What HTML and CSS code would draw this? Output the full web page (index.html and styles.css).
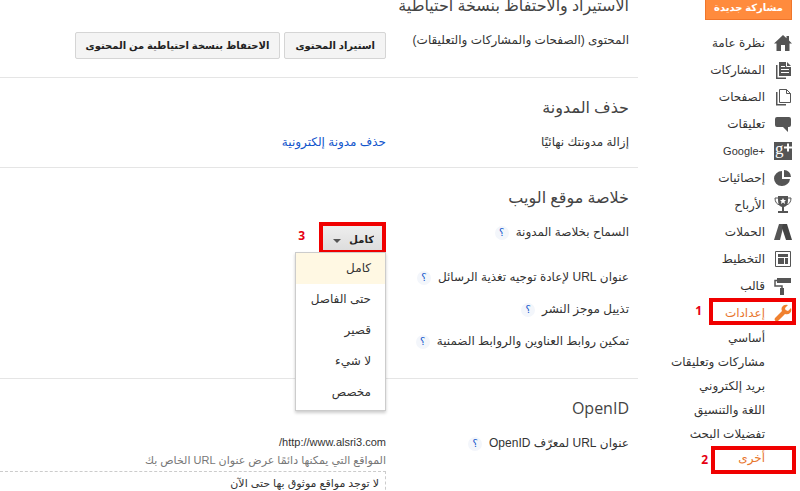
FILE: index.html
```html
<!DOCTYPE html>
<html lang="ar" dir="rtl">

<head>
    <meta charset="utf-8">
    <title>إعدادات</title>
    <link rel="stylesheet" href="styles.css">
</head>

<body>
    <div class="page">
        <nav class="sidebar">
            <button type="button" class="newPost">مشاركة جديدة</button>
            <ul class="menu">
                <li><a href="#overview">
                    <svg class="icon" viewBox="0 0 18 18"><path d="M9 1L0 9.500h2.500V17h4.500v-6h4v6h4.500V9.500H18L15 6.600V2h-2.500v2.300z"/></svg>
                    نظرة عامة</a></li>
                <li><a href="#posts">
                    <svg class="icon" viewBox="0 0 18 18"><path d="M2 4H3.500V16.500H12V18H2zM5 1h8l4 4v10H5z"/><path d="M12.500 1v4.500H17M7 5.500h4M7 8.500h8M7 11.500h8" fill="none" stroke="#fff"/></svg>
                    المشاركات</a></li>
                <li><a href="#pages">
                    <svg class="icon" viewBox="0 0 18 18"><path d="M2 4H3.500V16H12V17.500H2z"/><path d="M5.500 1.500h7l4 4v9h-11zM12.500 1.500v4h4" fill="none" stroke="#555"/></svg>
                    الصفحات</a></li>
                <li><a href="#comments">
                    <svg class="icon" viewBox="0 0 18 18"><path d="M3 2h12q2 0 2 2v6q0 2-2 2h-1v5l-5-5H3q-2 0-2-2V4q0-2 2-2z"/></svg>
                    تعليقات</a></li>
                <li><a href="#plus">
                    <svg class="icon" viewBox="0 0 18 18"><path d="M0 0h18v18H0z"/><text class="gplus" x="1" y="12" direction="ltr">g</text><path d="M10 5.500h8M14 1.500v8" stroke="#fff" stroke-width="2"/></svg>
                    <span class="latin" dir="ltr">Google+</span></a></li>
                <li><a href="#stats">
                    <svg class="icon" viewBox="0 0 18 18"><path d="M8 2v8h8a8 7.500 0 1 1-8-8z"/><path d="M10 1a7 7 0 0 1 7 7h-7z"/></svg>
                    إحصائيات</a></li>
                <li><a href="#earnings">
                    <svg class="icon" viewBox="0 0 18 18"><path d="M4 0h10v4q0 6-4 7v4h4v2H4v-2h4v-4Q4 10 4 4z"/><path d="M4 2H1q0 6 5 7M14 2h3q0 6-5 7" fill="none" stroke="#555"/><path d="M9 2l1 2h2l-1.500 1.500.5 2.500-2-1.500L7 8l.5-2.500L6 4h2z" fill="#fff"/></svg>
                    الأرباح</a></li>
                <li><a href="#campaigns">
                    <svg class="icon" viewBox="0 0 18 18"><path d="M5 1h5L6 17H0z"/><path d="M9 1h4l5 16h-6L8 5z" fill="#444"/></svg>
                    الحملات</a></li>
                <li><a href="#layout">
                    <svg class="icon" viewBox="0 0 18 18"><path d="M1.500 1.500h15v15h-15z" fill="none" stroke="#555"/><path d="M4 4h10v3H4zM4 8h6v6H4zM11 8h3v6h-3z"/></svg>
                    التخطيط</a></li>
                <li><a href="#template">
                    <svg class="icon" viewBox="0 0 18 18"><path d="M3 1h14v5H3zM6 11h4v7H6z"/><path d="M3 3.500H1V9h7v3" fill="none" stroke="#555" stroke-width="1.500"/></svg>
                    قالب</a></li>
                <li class="marked settings"><a href="#settings" class="active">
                    <svg class="icon" viewBox="0 0 18 18"><path d="M17 4l-3 3-2.500-1L11 4l3-3q-4-1-6 2-1 2 0 4L1 14q-1 1.500.3 2.800T4 17l7-7q3 1 5-1t1-5z"/></svg>
                    إعدادات</a><b class="step">1</b></li>
            </ul>
            <ul class="subMenu">
                <li><a href="#basic">أساسي</a></li>
                <li><a href="#posts-comments">مشاركات وتعليقات</a></li>
                <li><a href="#email">بريد إلكتروني</a></li>
                <li><a href="#language">اللغة والتنسيق</a></li>
                <li><a href="#search">تفضيلات البحث</a></li>
                <li class="marked other"><a href="#other" class="active">أخرى</a><b class="step">2</b></li>
            </ul>
        </nav>

        <main class="content">
            <section>
                <h2>الاستيراد والاحتفاظ بنسخة احتياطية</h2>
                <div class="row">
                    <div>المحتوى (الصفحات والمشاركات والتعليقات)</div>
                    <div class="buttons">
                        <button type="button">استيراد المحتوى</button>
                        <button type="button">الاحتفاظ بنسخة احتياطية من المحتوى</button>
                    </div>
                </div>
            </section>

            <section>
                <h2>حذف المدونة</h2>
                <div class="row">
                    <div>إزالة مدونتك نهائيًا</div>
                    <div><a href="#delete">حذف مدونة إلكترونية</a></div>
                </div>
            </section>

            <section class="feed">
                <h2>خلاصة موقع الويب</h2>
                <div class="row">
                    <div><label for="feedType">السماح بخلاصة المدونة</label><a href="#help" class="help">؟</a></div>
                    <div class="picker">
                        <select id="feedType">
                            <option>كامل</option>
                            <option>حتى الفاصل</option>
                            <option>قصير</option>
                            <option>لا شيء</option>
                            <option>مخصص</option>
                        </select>
                        <b class="step">3</b>
                        <ul class="options">
                            <li class="selected">كامل</li>
                            <li>حتى الفاصل</li>
                            <li>قصير</li>
                            <li>لا شيء</li>
                            <li>مخصص</li>
                        </ul>
                    </div>
                </div>
                <div class="row">
                    <div>عنوان URL لإعادة توجيه تغذية الرسائل<a href="#help" class="help">؟</a></div>
                </div>
                <div class="row">
                    <div>تذييل موجز النشر<a href="#help" class="help">؟</a></div>
                </div>
                <div class="row">
                    <div>تمكين روابط العناوين والروابط الضمنية<a href="#help" class="help">؟</a></div>
                </div>
            </section>

            <section>
                <h2>OpenID</h2>
                <div class="row">
                    <div>عنوان URL لمعرّف OpenID<a href="#help" class="help">؟</a></div>
                    <div class="openid">
                        <p class="latin">http://www.alsri3.com/</p>
                        <p class="note">المواقع التي يمكنها دائمًا عرض عنوان URL الخاص بك</p>
                        <p class="sites">لا توجد مواقع موثوق بها حتى الآن</p>
                    </div>
                </div>
            </section>
        </main>
    </div>
</body>

</html>
```
FILE: styles.css
```css
html, body {
    height: 100%;
}

body {
    margin: 0;
    overflow: hidden;
    background-color: #fff;
    color: #333;
    font-family: "Liberation Sans", "DejaVu Sans", sans-serif;
    font-size: 12px;
    line-height: 20px;
}

ul, p, h2 {
    margin: 0;
    padding: 0;
    list-style: none;
}

a {
    color: #15c;
    text-decoration: none;
}

button, select {
    font-family: inherit;
    font-weight: bold;
    font-size: 10px;
    color: #222;
}

.latin {
    font-size: 11px;
}

.page {
    display: flex;
}

/* sidebar */
.sidebar {
    flex: 0 0 154px;
    padding: 0 8px 0 0;
    box-sizing: border-box;
}

.newPost {
    display: block;
    width: 87px;
    height: 20px;
    padding: 0 0 5px;
    border: 1px solid #f0762b;
    border-top: 0;
    background-color: #ff8b3d;
    color: #fff;
}

.menu {
    margin-top: 9px;
}

.menu a, .subMenu a {
    color: #333;
}

.menu a {
    display: flex;
    align-items: center;
    gap: 9px;
    height: 27px;
}

.subMenu {
    padding-right: 27px;
    line-height: 24px;
    white-space: nowrap;
}

.menu a.active, .subMenu a.active {
    color: #e8762d;
}

.icon {
    width: 18px;
    height: 18px;
    fill: #555;
}

.active .icon {
    fill: #f0812f;
}

.gplus {
    fill: #fff;
    font: 17px "Liberation Serif", serif;
}

/* red step marks */
.marked, .picker {
    position: relative;
}

.marked::after {
    content: "";
    position: absolute;
    border: 4px solid #f00000;
    box-sizing: border-box;
    pointer-events: none;
}

.settings::after {
    top: -1px;
    right: -4px;
    width: 87px;
    height: 27px;
}

.other::after {
    top: 0;
    right: -31px;
    width: 85px;
    height: 28px;
}

.step {
    position: absolute;
    color: #e60012;
    font: bold 12px/20px "Open Sans", sans-serif;
}

.settings .step {
    top: 2px;
    right: 90px;
}

.other .step {
    top: 4px;
    right: 57px;
}

/* settings */
.content {
    flex: 1;
    min-width: 0;
    margin-top: -24px;
    padding-right: 8px;
}

section {
    padding: 16px 9px 15px 0;
    border-bottom: 1px solid #e5e5e5;
}

section:last-child {
    border-bottom: 0;
}

.feed {
    padding-bottom: 27px;
}

h2 {
    font: 16px/26px "Open Sans", "DejaVu Sans", sans-serif;
    color: #444;
}

.row {
    display: grid;
    grid-template-columns: 243px 1fr;
    margin-top: 12px;
    white-space: nowrap;
}

.help {
    display: inline-block;
    width: 14px;
    height: 14px;
    margin-right: 7px;
    border-radius: 50%;
    background-color: #f3f6fb;
    font-size: 10px;
    line-height: 14px;
    text-align: center;
}

.buttons {
    display: flex;
    gap: 4px;
    padding: 2px 0 3px;
}

.buttons button {
    height: 27px;
    padding: 0 10px;
    border: 1px solid #d5d5d5;
    border-radius: 2px;
    background-color: #f4f4f4;
}

.picker {
    height: 33px;
}

.picker select {
    display: block;
    width: 67px;
    height: 32px;
    padding: 2px 8px 0;
    border: 4px solid #f00000;
    border-radius: 0;
    appearance: none;
    background: linear-gradient(#eee, #ddd);
}

.picker::before {
    content: "";
    position: absolute;
    top: 17px;
    right: 45px;
    border: 4px solid transparent;
    border-top-color: #555;
    border-bottom: 0;
}

.picker .step {
    top: 4px;
    right: 81px;
}

.options {
    position: absolute;
    top: 30px;
    right: 0;
    width: 91px;
    padding-bottom: 2px;
    box-sizing: border-box;
    border: 1px solid #ccc;
    background-color: #fff;
    box-shadow: 0 2px 3px rgba(0,0,0,0.2);
    line-height: 31px;
}

.options li {
    padding-right: 14px;
}

.options .selected {
    background-color: #fff8e3;
}

.openid {
    line-height: 18px;
}

.openid .note {
    color: #777;
    font-size: 11px;
}

.sites {
    margin-top: 2px;
    padding: 2px 6px;
    border: 1px dashed #ccc;
    border-left: 0;
    font-size: 11px;
}
```
